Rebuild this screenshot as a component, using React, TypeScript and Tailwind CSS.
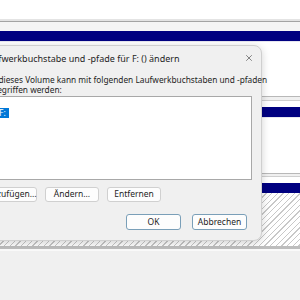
import { X } from "lucide-react";

const font = "font-['Noto_Sans','Liberation_Sans',sans-serif]";

const hatch =
  "bg-[repeating-linear-gradient(135deg,#c8c8c8_0px,#c8c8c8_1px,#ffffff_1px,#ffffff_4px)]";

function Button({ label, primary }: { label: string; primary?: boolean }) {
  return (
    <div
      className={
        primary
          ? "h-[16px] w-[55px] flex items-center justify-center rounded-[3px] border border-[#7a9fb8] bg-[#fdfdfd] text-[8.5px] text-[#1e1e1e]"
          : "h-[15px] w-[54px] flex items-center justify-center rounded-[3px] border border-[#d0d0d0] bg-[#fdfdfd] text-[8.5px] text-[#1e1e1e]"
      }
    >
      {label}
    </div>
  );
}

export default function App() {
  return (
    <div className={`relative w-[300px] h-[300px] overflow-hidden bg-white ${font}`}>
      {/* Hintergrund: Datenträgerverwaltung */}
      <div className="h-[19px] bg-white" />
      <div className="h-[2px] bg-[#e4e4e4]" />
      <div className="h-[1px] bg-[#a4a4a4]" />
      <div className="h-[9px] bg-[#f5f5f5]" />
      <div className="h-[10px] bg-[#000080]" />
      <div className="h-[1px] bg-[#e6e6f0]" />
      <div className="h-[54px] bg-white" />
      <div className="h-[1px] bg-[#b8b8b8]" />
      <div className="h-[3px] bg-[#f0f0f0]" />
      <div className="h-[1px] bg-[#cfcfcf]" />
      <div className="h-[6px] bg-white" />
      <div className="h-[10px] bg-[#000080]" />
      <div className="h-[1px] bg-[#e6e6f0]" />
      <div className="h-[55px] bg-white" />
      <div className="h-[1px] bg-[#b8b8b8]" />
      <div className="h-[2px] bg-[#f0f0f0]" />
      <div className="h-[1px] bg-[#cfcfcf]" />
      <div className="h-[6px] bg-white" />
      <div className="h-[10px] bg-[#000080]" />
      <div className={`h-[53px] ${hatch}`} />
      <div className="h-[3px] bg-[#bdbdbd]" />
      <div className="h-[2px] bg-[#fafafa]" />
      <div className="h-[60px] bg-[#f0f0f0]" />

      {/* Dialog */}
      <div className="absolute left-[-26px] top-[45px] w-[288px] h-[196px] flex flex-col rounded-[8px] border border-[#cfcfcf] bg-[#f0f0f0] shadow-[0_2px_8px_rgba(0,0,0,0.18)] text-[#1e1e1e]">
        <div className="h-[24px] flex items-center justify-between pl-[8px] pr-[7px]">
          <span className="text-[9px] leading-none whitespace-nowrap">
            Laufwerkbuchstabe und -pfade für F: () ändern
          </span>
          <X className="h-[10px] w-[10px] text-[#333]" strokeWidth={1.4} />
        </div>
        <div className="mt-[5px] pl-[8px] pr-[8px] text-[8.3px] leading-[10px]">
          <p className="whitespace-nowrap">
            Auf dieses Volume kann mit folgenden Laufwerkbuchstaben und -pfaden
          </p>
          <p className="whitespace-nowrap">zugegriffen werden:</p>
        </div>
        <div className="mt-[1px] ml-[8px] mr-[9px] h-[84px] border border-[#a8a8a8] bg-white p-[1px]">
          <span className="inline-block h-[10px] pl-[14px] pr-[3px] bg-[#0078d7] text-white text-[8.5px] leading-[10px]">
            F:
          </span>
        </div>
        <div className="mt-[7px] ml-[8px] flex gap-[8px]">
          <Button label="Hinzufügen..." />
          <Button label="Ändern..." />
          <Button label="Entfernen" />
        </div>
        <div className="mt-[12px] mr-[14px] flex justify-end gap-[11px]">
          <Button label="OK" primary />
          <Button label="Abbrechen" primary />
        </div>
      </div>
    </div>
  );
}
